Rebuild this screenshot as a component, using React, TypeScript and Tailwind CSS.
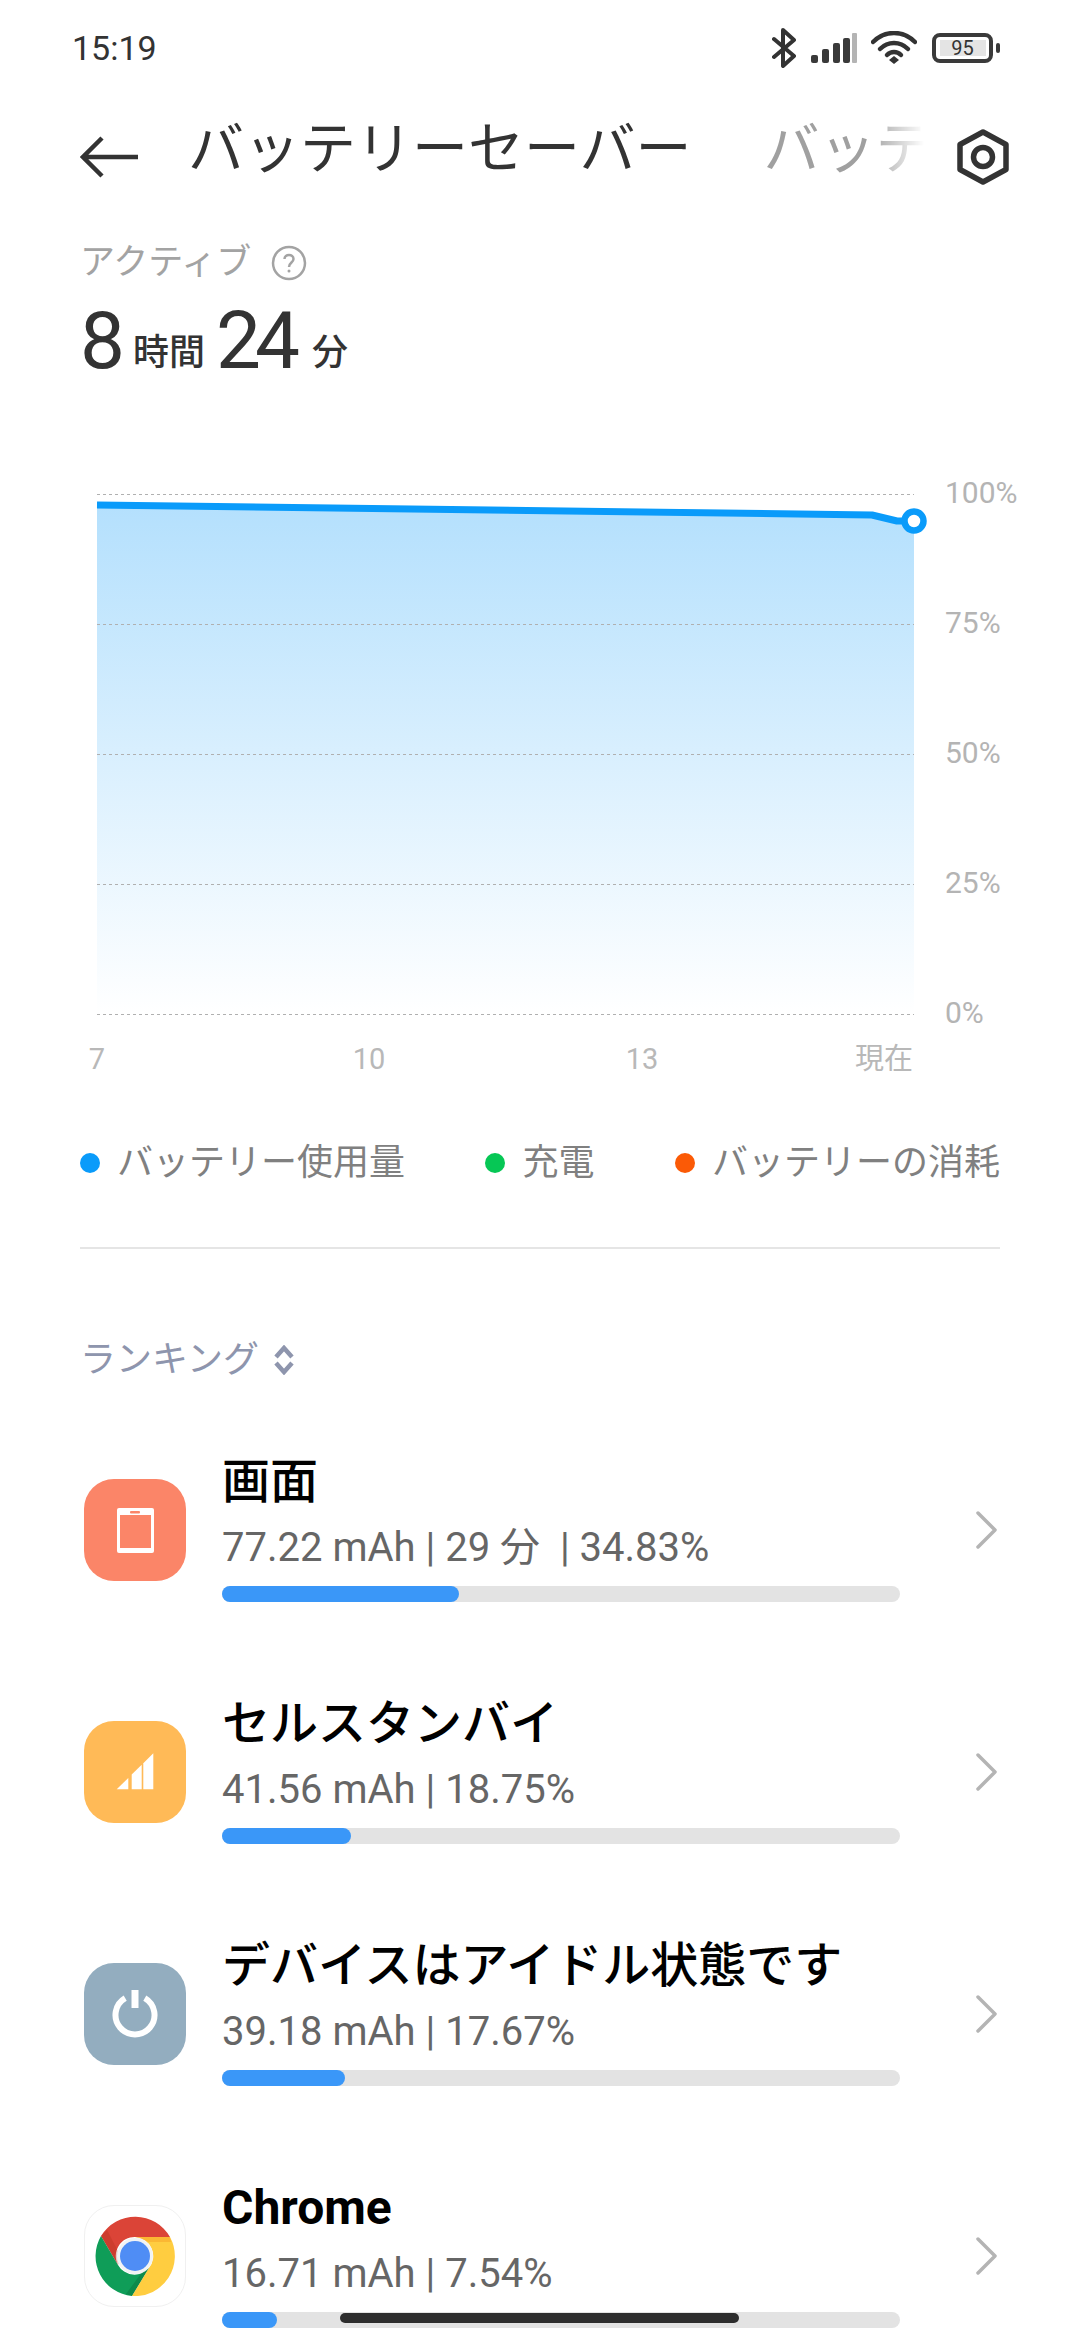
import { ReactNode } from 'react'

function StatusIcons() {
  return (
    <div className="flex items-center">
      <svg width="24" height="40" viewBox="0 0 24 40" className="mr-[15px]" fill="none" stroke="#333" strokeWidth="4" strokeLinejoin="round" strokeLinecap="round">
        <path d="M2 11 L22 28 L11 38 V2 L22 12 L2 29" />
      </svg>
      <svg width="46" height="30" viewBox="0 0 46 30" className="mr-[14px]">
        <rect x="0" y="22" width="7" height="8" rx="2" fill="#3a3a3a" />
        <rect x="11" y="16" width="7" height="14" rx="2" fill="#3a3a3a" />
        <rect x="22" y="10" width="7" height="20" rx="2" fill="#3a3a3a" />
        <rect x="32" y="5" width="7" height="25" rx="2" fill="#3a3a3a" />
        <rect x="41" y="0" width="5" height="30" rx="1" fill="#b4b4b4" />
      </svg>
      <svg width="46" height="34" viewBox="0 0 46 34" className="mr-[15px]" fill="none" stroke="#333" strokeWidth="4.5" strokeLinecap="round">
        <path d="M2 11 C14 -1 32 -1 44 11" />
        <path d="M9 18 C17 10 29 10 37 18" />
        <path d="M16 24 C20 20 26 20 30 24" />
        <path d="M23 25 L28 29 L23 33 L18 29 Z" fill="#333" stroke="none" />
      </svg>
      <div className="relative flex h-[30px] w-[61px] items-center justify-center rounded-[8px] border-[4px] border-[#3a3a3a]">
        <div className="flex h-[16px] w-[46px] items-center justify-center bg-[#e4e4e4] text-[20px] leading-none text-[#333]">95</div>
        <div className="absolute right-[-11px] top-[6px] h-[10px] w-[4px] rounded-[2px] bg-[#3a3a3a]" />
      </div>
      <div className="w-[87px]" />
    </div>
  )
}

function Chart() {
  return (
    <div className="mt-[86px] flex h-[560px] pl-[97px]">
      <svg width="817" height="560" viewBox="97 472 817 560" className="overflow-visible">
        <defs>
          <linearGradient id="area" x1="0" y1="0" x2="0" y2="1">
            <stop offset="0" stopColor="#b4e0fd" />
            <stop offset="1" stopColor="#ffffff" />
          </linearGradient>
        </defs>
        <path d="M97 505 L872 515 L897 521 L914 521 V1014 H97 Z" fill="url(#area)" />
        {[494, 624, 754, 884, 1014].map((y) => (
          <line key={y} x1="97" x2="914" y1={y + 0.5} y2={y + 0.5} stroke="#b0b0b0" strokeWidth="1" strokeDasharray="3 3" />
        ))}
        <path d="M97 505 L872 515 L897 521 L914 521" fill="none" stroke="#0a9bfa" strokeWidth="7" strokeLinejoin="round" />
        <circle cx="914" cy="521" r="9.5" fill="#fff" stroke="#0a9bfa" strokeWidth="6.5" />
      </svg>
      <div className="ml-[31px] mt-[1px] flex h-[560px] flex-col justify-between text-[30px] leading-[40px] text-[#b4b4b4]">
        <div>100%</div>
        <div>75%</div>
        <div>50%</div>
        <div>25%</div>
        <div>0%</div>
      </div>
    </div>
  )
}

function LegendItem({ color, label }: { color: string; label: string }) {
  return (
    <div className="flex items-center">
      <div className={`h-[20px] w-[20px] rounded-full ${color}`} />
      <span className="ml-[17px] text-[36px] leading-[40px] text-[#808080]">{label}</span>
    </div>
  )
}

function ChromeIcon() {
  return (
    <svg width="80" height="80" viewBox="-40 -40 80 80">
      <path d="M-34 -20 A40 40 0 0 1 35 -19 L0 -19 A19 19 0 0 0 -17 9 Z" fill="#db4437" />
      <path d="M-34 -20 A40 40 0 0 0 -3 40 L14 12 A19 19 0 0 1 -17 9 Z" fill="#0f9d58" />
      <path d="M35 -19 A40 40 0 0 1 -3 40 L14 12 A19 19 0 0 0 0 -19 Z" fill="#ffcd40" />
      <path d="M-34 -20 L-17 9 L-13 3 L-28 -26 Z" fill="#a52714" opacity="0.25" />
      <path d="M-3 40 L14 12 L8 15 L-9 38 Z" fill="#055524" opacity="0.25" />
      <path d="M0 -19 L35 -19 L36 -14 L14 -14 Z" fill="#ea6100" opacity="0.2" />
      <circle cx="0" cy="0" r="18" fill="#f1f3f4" />
      <circle cx="0" cy="0" r="15" fill="#4f8df5" />
    </svg>
  )
}

const rows: { title: string; sub: string; fill: number; bold?: boolean; icon: ReactNode }[] = [
  {
    title: '画面',
    sub: '77.22 mAh | 29 分  | 34.83%',
    fill: 237,
    icon: (
      <div className="h-[102px] w-[102px] rounded-[30px] bg-[#fb8568]">
        <svg width="102" height="102" viewBox="0 0 102 102">
          <rect x="33" y="29" width="37" height="45" rx="2" fill="#fff" />
          <rect x="36" y="36" width="31" height="33" fill="#fb8568" />
          <rect x="46" y="32" width="10" height="2.5" rx="1" fill="#fb8568" />
        </svg>
      </div>
    ),
  },
  {
    title: 'セルスタンバイ',
    sub: '41.56 mAh | 18.75%',
    fill: 129,
    icon: (
      <div className="h-[102px] w-[102px] rounded-[30px] bg-[#ffba57]">
        <svg width="102" height="102" viewBox="0 0 102 102" fill="#fff">
          <polygon points="32.7,68.3 44.3,68.3 44.3,57" />
          <polygon points="47.7,68.3 57.7,68.3 57.7,43.8 47.7,53.5" />
          <polygon points="59.3,68.3 69.3,68.3 69.3,32.3 59.3,42.2" />
        </svg>
      </div>
    ),
  },
  {
    title: 'デバイスはアイドル状態です',
    sub: '39.18 mAh | 17.67%',
    fill: 123,
    icon: (
      <div className="h-[102px] w-[102px] rounded-[30px] bg-[#93adbf]">
        <svg width="102" height="102" viewBox="0 0 102 102" fill="none" stroke="#fff" strokeWidth="6">
          <path d="M41.2 35.1 A19.5 19.5 0 1 0 60.8 35.1" />
          <path d="M51 27 V45" strokeWidth="7" />
        </svg>
      </div>
    ),
  },
  {
    title: 'Chrome',
    sub: '16.71 mAh | 7.54%',
    fill: 55,
    bold: true,
    icon: (
      <div className="flex h-[102px] w-[102px] items-center justify-center rounded-[30px] border border-[#f0f0f0] bg-white">
        <ChromeIcon />
      </div>
    ),
  },
]

export default function App() {
  return (
    <div className="relative h-[2340px] w-[1080px] overflow-hidden bg-white font-[Roboto,'Noto_Sans_CJK_JP',sans-serif]">
      {/* status bar */}
      <div className="flex h-[96px] items-center justify-between pl-[72px]">
        <span className="text-[34px] text-[#333]">15:19</span>
        <StatusIcons />
      </div>

      {/* title bar */}
      <div className="flex h-[122px] items-center pl-[80px]">
        <svg width="58" height="42" viewBox="0 0 58 42" fill="none" stroke="#333" strokeWidth="4.5">
          <path d="M22 2 L3 21 L22 40 M3 21 H58" />
        </svg>
        <div className="ml-[50px] flex w-[740px] whitespace-nowrap pb-[17px] text-[56px] font-normal leading-[70px] [mask-image:linear-gradient(to_right,#000_92%,transparent_99.5%)]">
          <span className="text-[#333]">バッテリーセーバー</span>
          <span className="ml-[72px] text-[#a0a0a0]">バッテ</span>
        </div>
        <svg width="52" height="56" viewBox="0 0 52 56" className="ml-[29px]" fill="none" stroke="#333" strokeWidth="5.5" strokeLinejoin="round">
          <path d="M26 3 L49 15.5 V40.5 L26 53 L3 40.5 V15.5 Z" />
          <circle cx="26" cy="28" r="9.5" />
        </svg>
      </div>

      {/* active time */}
      <div className="mt-[25px] flex h-[40px] items-center pl-[80px]">
        <span className="text-[35px] leading-[40px] text-[#a3a3a3]">アクティブ</span>
        <svg width="36" height="36" viewBox="0 0 36 36" className="ml-[20px]" fill="none" stroke="#a3a3a3" strokeWidth="2.5">
          <circle cx="18" cy="18" r="16" />
          <path d="M13.5 14 C13.5 8.5 22.5 8.5 22.5 14 C22.5 17.5 18 17.5 18 22" />
          <circle cx="18" cy="26" r="1.5" fill="#a3a3a3" stroke="none" />
        </svg>
      </div>
      <div className="mt-[13px] flex h-[90px] items-baseline pl-[80px] text-[#333]">
        <span className="text-[80px] leading-[90px] tracking-[-5px]">8</span>
        <span className="ml-[13px] -translate-y-[3px] text-[36px] font-medium leading-[90px]">時間</span>
        <span className="ml-[11px] text-[80px] leading-[90px] tracking-[-6px]">24</span>
        <span className="ml-[18px] -translate-y-[3px] text-[36px] font-medium leading-[90px]">分</span>
      </div>

      <Chart />

      {/* x axis */}
      <div className="mt-[7px] flex h-[40px] items-center pl-[67px] text-[29px] leading-[40px] text-[#b8b8b8]">
        <span className="w-[60px] text-center">7</span>
        <span className="ml-[212px] w-[60px] text-center">10</span>
        <span className="ml-[213px] w-[60px] text-center">13</span>
        <span className="ml-[183px]">現在</span>
      </div>

      <div className="mx-[80px] mt-[64px] flex h-[40px] items-center justify-between">
        <LegendItem color="bg-[#0a9bfa]" label="バッテリー使用量" />
        <LegendItem color="bg-[#06c755]" label="充電" />
        <LegendItem color="bg-[#fb5a06]" label="バッテリーの消耗" />
      </div>

      <div className="mx-[80px] mt-[64px] h-[2px] bg-[#e5e5e5]" />

      <div className="mt-[89px] flex h-[44px] items-center pl-[80px]">
        <span className="text-[36px] leading-[44px] text-[#8e95ad]">ランキング</span>
        <svg width="22" height="30" viewBox="0 0 22 30" className="ml-[14px]" fill="none" stroke="#8e95ad" strokeWidth="4.5">
          <path d="M3 12 L11 3 L19 12 M3 18 L11 27 L19 18" />
        </svg>
      </div>

      <div className="mt-[69px] flex flex-col gap-[91px]">
        {rows.map((row) => (
          <div key={row.title} className="flex h-[151px] pl-[84px]">
            <div className="mt-[28px]">{row.icon}</div>
            <div className="ml-[36px] w-[678px] pt-[1px]">
              <div className={`h-[60px] text-[48px] leading-[60px] text-black ${row.bold ? 'font-bold' : 'font-medium'}`}>{row.title}</div>
              <div className="mt-[3px] h-[66px] whitespace-pre text-[40px] leading-[66px] text-[#666]">{row.sub}</div>
              <div className="mt-[5px] h-[16px] rounded-full bg-[#e3e3e3]">
                <div className="h-[16px] rounded-full bg-[#3a97f8]" style={{ width: row.fill }} />
              </div>
            </div>
            <svg width="22" height="38" viewBox="0 0 22 38" className="ml-[76px] mt-[60px]" fill="none" stroke="#b4b4b4" strokeWidth="3.5" strokeLinecap="round" strokeLinejoin="round">
              <path d="M2 2 L19 19 L2 36" />
            </svg>
          </div>
        ))}
      </div>

      {/* home indicator */}
      <div className="absolute left-[340px] top-[2313px] h-[10px] w-[399px] rounded-full bg-[#2e2e2e]" />
    </div>
  )
}
